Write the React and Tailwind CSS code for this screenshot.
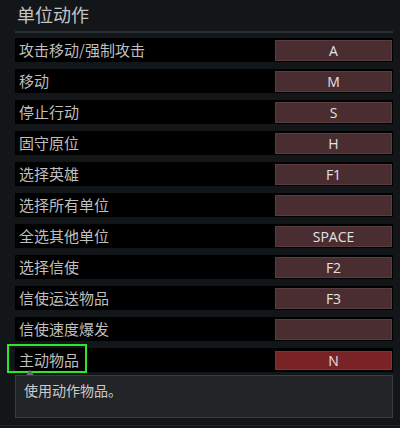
const rows = [
  { label: '攻击移动/强制攻击', key: 'A' },
  { label: '移动', key: 'M' },
  { label: '停止行动', key: 'S' },
  { label: '固守原位', key: 'H' },
  { label: '选择英雄', key: 'F1' },
  { label: '选择所有单位', key: '' },
  { label: '全选其他单位', key: 'SPACE' },
  { label: '选择信使', key: 'F2' },
  { label: '信使运送物品', key: 'F3' },
  { label: '信使速度爆发', key: '' },
  { label: '主动物品', key: 'N', active: true },
];

const KeyButton = ({ value, active }) => (
  <div
    className={
      active
        ? 'w-[117px] h-[19px] mr-[1px] flex items-center justify-center bg-[#7a2327] border border-[#8a3034] text-[14px] text-[#e2e2e2]'
        : 'w-[117px] h-[21px] mr-[1px] flex items-center justify-center bg-[#4a2d31] border border-[#5b3c40] text-[14px] text-[#e2e2e2]'
    }
    style={{ fontFamily: '"Open Sans", "Liberation Sans", sans-serif' }}
  >
    {value}
  </div>
);

export default function App() {
  return (
    <div
      className="relative w-[400px] h-[428px] overflow-hidden bg-[#131619] text-[#bfbfbf]"
      style={{ fontFamily: '"Noto Sans CJK SC", "Noto Sans", sans-serif' }}
    >
      {/* Title */}
      <div className="h-[31px] pl-[17px] pt-[1px] text-[18px] leading-[27px] text-[#c4c4c4]">单位动作</div>
      <div className="ml-[15px] w-[378px] h-[2px] bg-[#2a2f33]" />

      {/* Rows */}
      <div className="mt-[5px] ml-[15px] w-[378px] flex flex-col gap-[7px]">
        {rows.map((row) => (
          <div key={row.label} className="h-[24px] bg-black flex items-center justify-between pl-[4px]">
            <span className="text-[15px] leading-[24px]">{row.label}</span>
            <KeyButton value={row.key} active={row.active} />
          </div>
        ))}

        {/* Description */}
        <div className="-mt-[4px] h-[43px] bg-[#222527] border border-[#3a3d40] pl-[8px] pt-[4px] text-[14px] leading-[20px] text-[#cbcbcb]">
          使用动作物品。
        </div>
      </div>

      {/* Highlight around the selected label */}
      <div className="absolute left-[7px] top-[344px] w-[80px] h-[29px] border-2 border-[#2ee62e]" />
      <div className="absolute left-[26px] top-[370px] w-0 h-0 border-l-[4px] border-r-[4px] border-b-[5px] border-l-transparent border-r-transparent border-b-[#6a6d70]" />

      <div className="absolute left-0 right-0 top-[425px] h-[1px] bg-[#1f2326]" />
    </div>
  );
}
